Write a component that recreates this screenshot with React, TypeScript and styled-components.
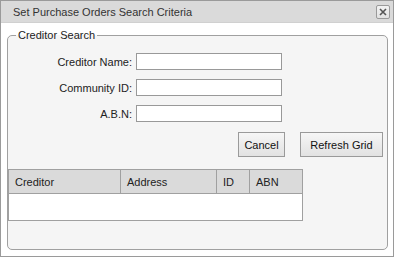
import styled, { createGlobalStyle } from "styled-components";

const GlobalStyle = createGlobalStyle`
  html, body {
    margin: 0;
    padding: 0;
    background: #ffffff;
  }
  body {
    font-family: "Liberation Sans", Arial, sans-serif;
    font-size: 11px;
  }
`;

type Column = {
  title: string;
  width: number;
};

// widths include the left divider line, except for the first column
const columns: Column[] = [
  { title: "Creditor", width: 111 },
  { title: "Address", width: 96 },
  { title: "ID", width: 33 },
  { title: "ABN", width: 53 },
];

const fields = ["Creditor Name:", "Community ID:", "A.B.N:"];

const CloseIcon = () => (
  <svg width="8" height="8" viewBox="0 0 8 8">
    <path d="M1 1 L7 7 M7 1 L1 7" stroke="#555" strokeWidth="1.6" />
  </svg>
);

export default function App() {
  return (
    <>
      <GlobalStyle />
      <Window>
        <TitleBar>
          <Title>Set Purchase Orders Search Criteria</Title>
          <CloseButton aria-label="Close">
            <CloseIcon />
          </CloseButton>
        </TitleBar>
        <Body>
          <FieldSet>
            <Legend>Creditor Search</Legend>
            <Form>
              {fields.map((label) => (
                <FormRow key={label}>
                  <Label>{label}</Label>
                  <TextInput type="text" />
                </FormRow>
              ))}
            </Form>
            <ButtonBar>
              <Button $width={47}>Cancel</Button>
              <Button $width={83}>Refresh Grid</Button>
            </ButtonBar>
            <Grid>
              <HeaderRow>
                {columns.map((col) => (
                  <HeaderCell key={col.title} $width={col.width}>
                    {col.title}
                  </HeaderCell>
                ))}
              </HeaderRow>
              <GridBody />
            </Grid>
          </FieldSet>
        </Body>
      </Window>
    </>
  );
}

const Window = styled.div`
  width: 394px;
  height: 257px;
  box-sizing: border-box;
  border: 1px solid #9a9a9a;
  background: #ffffff;
  display: flex;
  flex-direction: column;
`;

const TitleBar = styled.div`
  height: 22px;
  box-sizing: border-box;
  background: #dadada;
  border-bottom: 1px solid #d0d0d0;
  display: flex;
  align-items: center;
  padding: 0 3px 0 12px;
`;

const Title = styled.div`
  flex: 1;
  color: #333333;
  font-size: 11px;
`;

const CloseButton = styled.button`
  width: 14px;
  height: 14px;
  box-sizing: border-box;
  padding: 0;
  margin: 0;
  border: 1px solid #9a9a9a;
  border-radius: 2px;
  background: linear-gradient(#f2f2f2, #e2e2e2);
  display: flex;
  align-items: center;
  justify-content: center;
`;

const Body = styled.div`
  flex: 1;
  display: flex;
  flex-direction: column;
  padding: 6px 5px 6px 6px;
  min-height: 0;
`;

const FieldSet = styled.fieldset`
  flex: 1;
  margin: 0;
  padding: 0;
  min-width: 0;
  border: 1px solid #a0a0a0;
  border-radius: 5px;
  background: #f5f5f5;
`;

const Legend = styled.legend`
  margin-left: 8px;
  padding: 0 2px;
  font-size: 11px;
  line-height: 13px;
  color: #222222;
`;

const Form = styled.div`
  display: flex;
  flex-direction: column;
  gap: 9px;
  margin-top: 11px;
`;

const FormRow = styled.div`
  display: flex;
  align-items: center;
  gap: 4px;
`;

const Label = styled.label`
  width: 124px;
  text-align: right;
  color: #222222;
  font-size: 11px;
`;

const TextInput = styled.input`
  width: 146px;
  height: 17px;
  box-sizing: border-box;
  margin: 0;
  padding: 0 2px;
  border: 1px solid #999999;
  background: #ffffff;
  font-family: inherit;
  font-size: 11px;
`;

const ButtonBar = styled.div`
  display: flex;
  justify-content: flex-end;
  gap: 15px;
  margin: 10px 4px 0 0;
`;

const Button = styled.button<{ $width: number }>`
  width: ${(p) => p.$width}px;
  height: 25px;
  box-sizing: border-box;
  margin: 0;
  padding: 0;
  border: 1px solid #9a9a9a;
  background: linear-gradient(#f6f6f6, #e2e2e2);
  font-family: inherit;
  font-size: 11px;
  color: #111111;
`;

const Grid = styled.div`
  width: 295px;
  box-sizing: border-box;
  margin-top: 12px;
  border: 1px solid #a0a0a0;
  background: #ffffff;
`;

const HeaderRow = styled.div`
  display: flex;
  height: 23px;
  background: #dadada;
  border-bottom: 1px solid #a0a0a0;
`;

const HeaderCell = styled.div<{ $width: number }>`
  width: ${(p) => p.$width}px;
  box-sizing: border-box;
  padding-left: 6px;
  display: flex;
  align-items: center;
  font-size: 11px;
  color: #222222;
  & + & {
    border-left: 1px solid #a0a0a0;
  }
`;

const GridBody = styled.div`
  height: 26px;
`;
